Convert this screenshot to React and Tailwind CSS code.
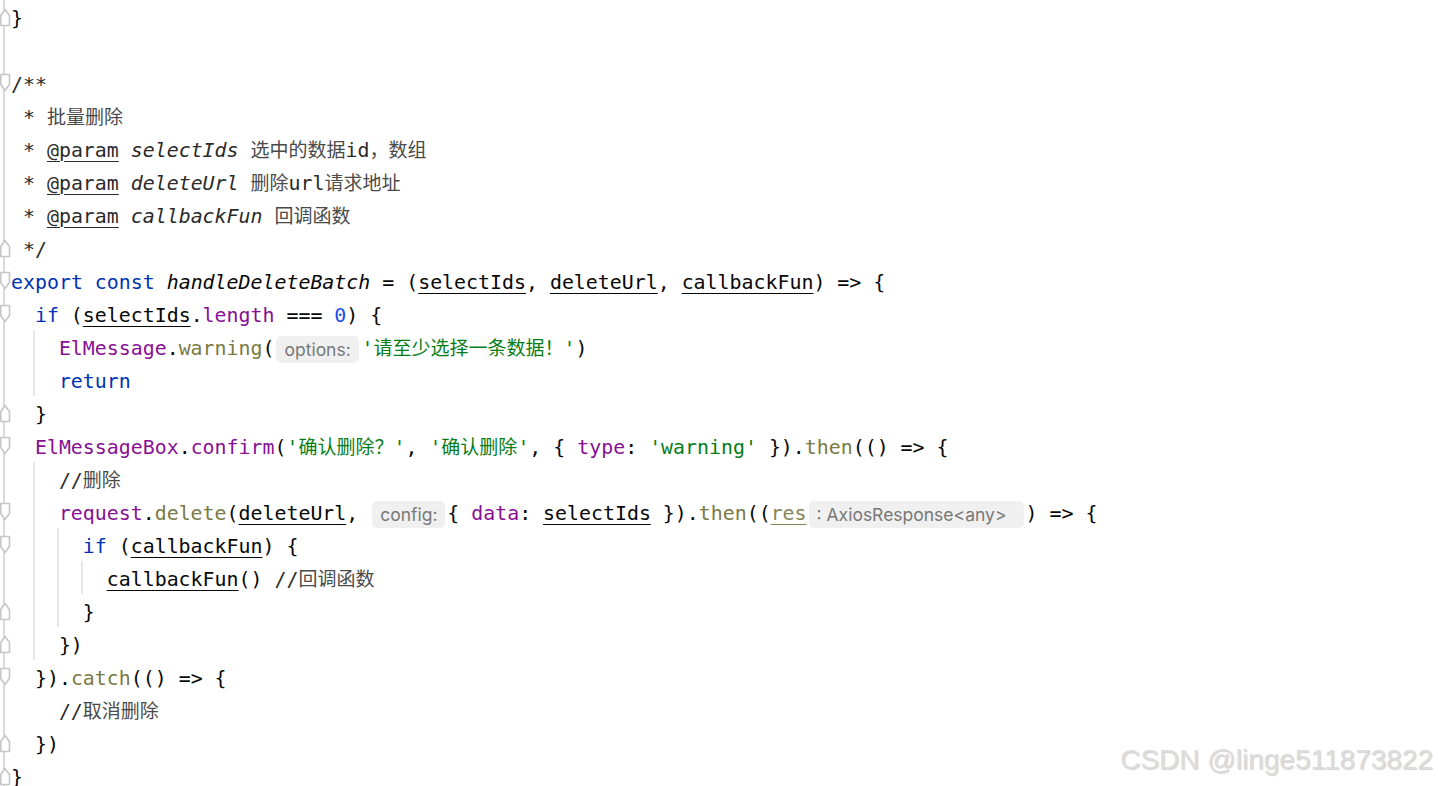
import React from 'react';

const kw = 'text-[#0033b3]';
const prop = 'text-[#871094]';
const meth = 'text-[#7a7a43]';
const str = 'text-[#067d17]';
const num = 'text-[#1750eb]';
const doc = 'text-[#2b2b2b]';
const zh = 'text-[#4a4a4a] text-[19px]';
const param = 'underline underline-offset-[4px] decoration-1';

function FoldMark({ type }) {
  // start = block opens (point down), end = block closes (point up)
  const d = type === 'start'
    ? 'M0.75 1.5 H9.5 V11.5 L5 17.5 L0.75 11.5 Z'
    : 'M0.75 18.5 H9.5 V8.5 L5 2.5 L0.75 8.5 Z';
  return (
    <svg width="11" height="20" viewBox="0 0 11 20" className="absolute left-0 top-1/2 -translate-y-1/2" aria-hidden="true">
      <path d={d} fill="#ffffff" stroke="#c6c6c6" strokeWidth="1.6" strokeLinejoin="round" />
    </svg>
  );
}

function Hint({ children, w }) {
  return (
    <span className={`mx-[2px] inline-block h-[27px] rounded-[5px] bg-[#f0f0f0] pl-[8px] align-middle font-['Inter',sans-serif] text-[17.5px] leading-[27px] text-[#787878] ${w}`}>
      {children}
    </span>
  );
}

function Z({ children }) {
  return <span className="text-[19px]">{children}</span>;
}

function Row({ fold, indent = 0, guides = [], children }) {
  return (
    <div className="flex h-[33px] items-center whitespace-pre">
      <div className="relative h-full w-[11px] shrink-0">
        <div className="absolute bottom-0 left-[3px] top-0 w-[2px] bg-[#dadada]" />
        {fold && <FoldMark type={fold} />}
      </div>
      {Array.from({ length: indent }).map((_, i) => (
        <span key={i} className="relative h-full w-[2ch] shrink-0">
          {guides.includes(i) && <span className="absolute bottom-0 left-[-2px] top-0 w-[2px] bg-[#e6e6e6]" />}
        </span>
      ))}
      <span className="pt-[3px] text-[#080808]">{children}</span>
    </div>
  );
}

export default function App() {
  return (
    <div className="relative h-[786px] w-full overflow-hidden bg-white font-['DejaVu_Sans_Mono','Noto_Sans_CJK_SC',monospace] text-[19.9px] leading-[33px]">
      <Row fold="end">{'}'}</Row>
      <Row />
      <Row fold="start"><span className={doc}>/**</span></Row>
      <Row><span className={doc}> * </span><span className={zh}>批量删除</span></Row>
      <Row>
        <span className={doc}> * </span><span className={`${doc} ${param}`}>@param</span>
        <span className={`${doc} italic`}> selectIds </span><span className={zh}>选中的数据</span><span className={doc}>id</span><span className={zh}>，数组</span>
      </Row>
      <Row>
        <span className={doc}> * </span><span className={`${doc} ${param}`}>@param</span>
        <span className={`${doc} italic`}> deleteUrl </span><span className={zh}>删除</span><span className={doc}>url</span><span className={zh}>请求地址</span>
      </Row>
      <Row>
        <span className={doc}> * </span><span className={`${doc} ${param}`}>@param</span>
        <span className={`${doc} italic`}> callbackFun </span><span className={zh}>回调函数</span>
      </Row>
      <Row fold="end"><span className={doc}> */</span></Row>
      <Row fold="start">
        <span className={kw}>export const </span><span className="italic">handleDeleteBatch</span> = (<span className={param}>selectIds</span>, <span className={param}>deleteUrl</span>, <span className={param}>callbackFun</span>) =&gt; {'{'}
      </Row>
      <Row fold="start" indent={1}>
        <span className={kw}>if</span> (<span className={param}>selectIds</span>.<span className={prop}>length</span> === <span className={num}>0</span>) {'{'}
      </Row>
      <Row indent={2} guides={[1]}>
        <span className={prop}>ElMessage</span>.<span className={meth}>warning</span>(<Hint w="w-[83px]">options:</Hint><span className={str}>'<Z>请至少选择一条数据！</Z>'</span>)
      </Row>
      <Row indent={2} guides={[1]}><span className={kw}>return</span></Row>
      <Row fold="end" indent={1}>{'}'}</Row>
      <Row fold="start" indent={1}>
        <span className={prop}>ElMessageBox</span>.<span className={prop}>confirm</span>(<span className={str}>'<Z>确认删除？</Z>'</span>, <span className={str}>'<Z>确认删除</Z>'</span>, {'{ '}<span className={prop}>type</span>: <span className={str}>'warning'</span>{' }).'}<span className={meth}>then</span>(() =&gt; {'{'}
      </Row>
      <Row indent={2} guides={[1]}><span className={doc}>//</span><span className={zh}>删除</span></Row>
      <Row fold="start" indent={2} guides={[1]}>
        <span className={prop}>request</span>.<span className={meth}>delete</span>(<span className={param}>deleteUrl</span>, <Hint w="w-[73px]">config:</Hint>{'{ '}<span className={prop}>data</span>: <span className={param}>selectIds</span>{' }).'}<span className={meth}>then</span>((<span className={`text-[#85855a] ${param}`}>res</span><Hint w="w-[215px]">: AxiosResponse&lt;any&gt;</Hint>) =&gt; {'{'}
      </Row>
      <Row fold="start" indent={3} guides={[1, 2]}>
        <span className={kw}>if</span> (<span className={param}>callbackFun</span>) {'{'}
      </Row>
      <Row indent={4} guides={[1, 2, 3]}>
        <span className={param}>callbackFun</span>() <span className={doc}>//</span><span className={zh}>回调函数</span>
      </Row>
      <Row fold="end" indent={3} guides={[1, 2]}>{'}'}</Row>
      <Row fold="end" indent={2} guides={[1]}>{'})'}</Row>
      <Row fold="start" indent={1}>{'}).'}<span className={meth}>catch</span>(() =&gt; {'{'}</Row>
      <Row indent={2}><span className={doc}>//</span><span className={zh}>取消删除</span></Row>
      <Row fold="end" indent={1}>{'})'}</Row>
      <Row fold="end">{'}'}</Row>

      <div className="absolute bottom-[12px] right-[5px] font-['Liberation_Sans',sans-serif] text-[28px] leading-none text-[#dcdcdc] [text-shadow:1px_1px_1px_rgba(0,0,0,0.18)]">
        CSDN @linge511873822
      </div>
    </div>
  );
}
